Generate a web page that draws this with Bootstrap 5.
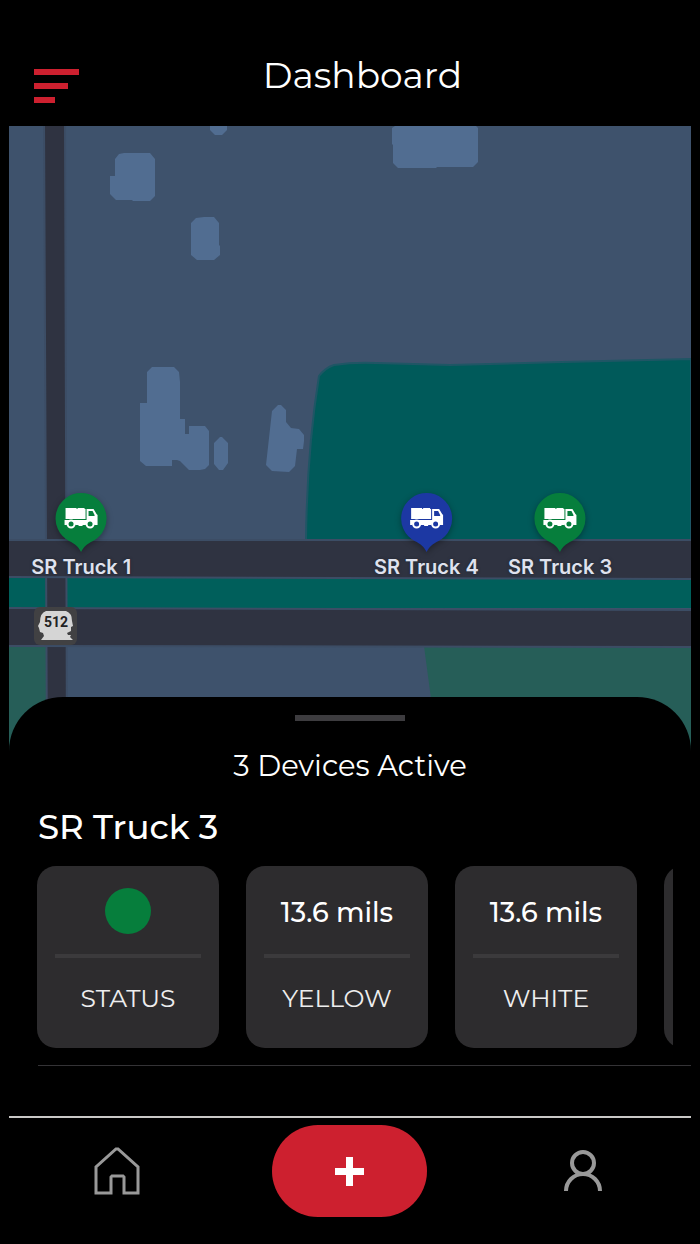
<!DOCTYPE html>
<html lang="en">
<head>
<meta charset="utf-8">
<meta name="viewport" content="width=device-width, initial-scale=1">
<title>Dashboard</title>
<link href="https://cdn.jsdelivr.net/npm/bootstrap@5.3.0/dist/css/bootstrap.min.css" rel="stylesheet">
<style>
  body { background: #000; color: #fff; font-family: Montserrat, Inter, "Liberation Sans", sans-serif; }
  .app-header { padding: 50px 54px 0 34px; height: 126px; }
  .menu-btn { padding: 19px 0 0; }
  .screen-title { font-size: 36px; line-height: 50px; font-weight: 400; }
  .map-area { margin: 0 9px; min-height: 480px; background: #3e526c; }
  .map-pin { transform: translateX(-50%); top: 58%; padding: 0; color: #dfe2ee; font: 600 20px/24px Inter, "Liberation Sans", sans-serif; }
  .map-pin svg { filter: drop-shadow(0 2px 3px #0005); }
  .pin-1 { left: 10.6%; }
  .pin-4 { left: 61.2%; }
  .pin-3 { left: 80.8%; }
  .pin-label { margin-top: -2px; text-shadow: 0 0 3px #20242f; }
  .route-shield { left: 3.6%; top: 77%; }
  .sheet { margin: -54px 9px 0; border-radius: 54px 54px 0 0; background: #000; padding-top: 18px; }
  .grab-bar { width: 110px; height: 6px; background: #3d3c3f; }
  .active-count { font-size: 29px; line-height: 36px; font-weight: 400; margin-top: 27px; }
  .device-name { font-size: 34px; line-height: 44px; font-weight: 500; margin: 21px 0 0 29px; }
  .tile-row { gap: 27px; margin: 17px 18px 0 28px; scrollbar-width: none; }
  .tile-row::-webkit-scrollbar { display: none; }
  .tile { flex: 0 0 182px; height: 182px; border-radius: 19px; background: #2d2c2e; padding: 20px 18px; }
  .tile-value { height: 50px; font-size: 27px; font-weight: 500; }
  .tile-text { padding-top: 4px; }
  .tile-rule { height: 4px; margin-top: 18px; background: #3b3a3c; }
  .tile-label { font-size: 25px; line-height: 32px; font-weight: 400; margin-top: 24px; color: #eee; }
  .status-dot { width: 46px; height: 46px; background: #067e3c; }
  .device-end { height: 51px; margin: 17px 0 0 29px; border-top: 1px solid #343336; }
  .tab-line { height: 2px; margin: 0 9px; background: #c9c8c6; }
  .tab-bar { height: 126px; padding-top: 7px; }
  .tab-link { height: 92px; }
  .add-btn { width: 155px; height: 92px; border-radius: 46px; background: #cd202f; }
  .add-btn:hover { background: #b41b29; }
</style>
</head>
<body>
<svg class="d-none" aria-hidden="true">
  <symbol id="truck" viewBox="0 0 33 21">
    <path fill="#fff" d="M1 0h11v1h1V0h7v1h1v10H1zM22 1h7l3 5 1 1v10h-3a5 5 0 0 0-9 0h-3v1h-4v-1h-3a5 5 0 0 0-9 0H0v-5h22z"/>
    <path fill="currentColor" d="M24 3h4l2 4v1h-6z"/>
    <circle cx="6.500" cy="16" r="3.500" fill="currentColor" stroke="#fff" stroke-width="2"/>
    <circle cx="25.500" cy="16" r="3.500" fill="currentColor" stroke="#fff" stroke-width="2"/>
  </symbol>
  <symbol id="pin" viewBox="0 0 64 68">
    <path fill="currentColor" d="M32 4a25.500 25.500 0 0 1 12 48c-6 3-9 5-12 11-3-6-6-8-12-11A25.500 25.500 0 0 1 32 4z"/>
    <use href="#truck" x="15" y="19" width="34" height="21"/>
  </symbol>
</svg>

<div class="min-vh-100 d-flex flex-column">
  <header class="app-header d-flex align-items-start">
    <button type="button" class="menu-btn btn border-0 rounded-0" aria-label="Menu">
      <svg class="d-block" width="45" height="34" viewBox="0 0 45 34" fill="#cd202f"><path d="M0 0h45v6H0zM0 14h34v6H0zM0 28h21v6H0z"/></svg>
    </button>
    <h1 class="screen-title flex-grow-1 text-center mb-0">Dashboard</h1>
  </header>

  <main class="d-flex flex-column flex-grow-1">
    <section class="map-area position-relative flex-grow-1 overflow-hidden" aria-label="Map">
      <svg class="position-absolute top-0 start-0 w-100 h-100" viewBox="9 126 682 625" preserveAspectRatio="none" aria-hidden="true">
        <path fill="#3e526c" d="M9 126h682v625H9z"/>
        <g fill="#516d91">
          <path d="M210 126h17v4l-5 5h-7l-5-5zM119 154l5-1h26l5 6v37l-5 5h-17l-1-1h-16l-6-6v-18h5v-17zM196 218l8-1h10l5 6v22l1 1v9l-6 5h-17l-6-5v-32zM395 126h81l2 2v34l-5 5h-36l-1 1h-38l-5-5v-18l-1-1v-16z"/>
          <path d="M152 367h22l5 5 1 10v37h5v15h4v-8h16l4 5v34l-4 4-5 1h-11l-9-9-3-1h-5v6h-26l-6-5v-58h7v-31zM220 437h2l6 6v20l-5 7h-4l-5-6v-21zM278 405h3l5 5v12l5 6 8 1 5 6v6l-1 8h-6l-2 17-6 6-17-1-6-6 6-54z"/>
        </g>
        <path fill="#005a5a" stroke="#1f5665" stroke-width="2" d="M306 540q1-90 13-164 6-8 15-11 20-3 42-2l74 2 112-3 129-3v181z"/>
        <path fill="#005f5b" d="M9 578h682v30H9z"/>
        <path fill="#265e58" d="M9 646h37v105H9zM424 646h267v105H438z"/>
        <g fill="#2f3341" stroke="#3c4d65" stroke-width="2">
          <path d="M44 120h21l2 640H47z"/>
          <path d="M0 540h702v39l-702-2zM0 608l702 2v37l-702-1z"/>
        </g>
      </svg>

      <button type="button" class="map-pin pin-1 btn border-0 position-absolute d-flex flex-column align-items-center text-nowrap">
        <svg width="64" height="68" color="#067e3c"><use href="#pin"/></svg>
        <span class="pin-label">SR Truck 1</span>
      </button>
      <button type="button" class="map-pin pin-4 btn border-0 position-absolute d-flex flex-column align-items-center text-nowrap">
        <svg width="64" height="68" color="#1c38a3"><use href="#pin"/></svg>
        <span class="pin-label">SR Truck 4</span>
      </button>
      <button type="button" class="map-pin pin-3 btn border-0 position-absolute d-flex flex-column align-items-center text-nowrap">
        <svg width="64" height="68" color="#067e3c"><use href="#pin"/></svg>
        <span class="pin-label">SR Truck 3</span>
      </button>
      <svg class="route-shield position-absolute" width="43" height="38" viewBox="0 0 43 38">
        <rect width="43" height="38" rx="6" fill="#414143"/>
        <path fill="#d5d5d5" d="M12 4h20q6 2 6 10l1 5-2 1v4l-4 2 1 2h3l-1 2 3 3H7l3-4-1-3-3-1-1-4-1-2 2-4q0-9 6-11z"/>
        <text x="22" y="20" text-anchor="middle" font-family="Roboto, 'Liberation Sans', sans-serif" font-weight="700" font-size="14" fill="#222224">512</text>
      </svg>
    </section>

    <section class="sheet position-relative">
      <div class="grab-bar mx-auto"></div>
      <p class="active-count text-center mb-0">3 Devices Active</p>
      <h2 class="device-name">SR Truck 3</h2>
      <div class="tile-row d-flex overflow-auto">
        <div class="tile text-center">
          <div class="tile-value d-flex align-items-center justify-content-center"><span class="status-dot rounded-circle" role="img" aria-label="Active"></span></div>
          <div class="tile-rule"></div>
          <div class="tile-label">STATUS</div>
        </div>
        <div class="tile text-center">
          <div class="tile-value tile-text d-flex align-items-center justify-content-center">13.6 mils</div>
          <div class="tile-rule"></div>
          <div class="tile-label">YELLOW</div>
        </div>
        <div class="tile text-center">
          <div class="tile-value tile-text d-flex align-items-center justify-content-center">13.6 mils</div>
          <div class="tile-rule"></div>
          <div class="tile-label">WHITE</div>
        </div>
        <div class="tile"></div>
      </div>
      <div class="device-end"></div>
    </section>
  </main>

  <div class="tab-line"></div>
  <nav class="tab-bar row g-0" aria-label="Main">
    <div class="col-4">
      <a href="#" class="tab-link d-flex align-items-center justify-content-center" aria-label="Home">
        <svg width="46" height="48" viewBox="0 0 46 48" fill="none" stroke="#999" stroke-width="3"><path d="M2 46V20L22 2h2l20 18v26H30V30l-1-1H18l-1 1v16z"/></svg>
      </a>
    </div>
    <div class="col-4 d-flex justify-content-center">
      <button type="button" class="add-btn btn p-0 border-0 d-flex align-items-center justify-content-center" aria-label="Add">
        <svg width="29" height="29" viewBox="0 0 29 29" fill="#fff"><path d="M11 0h7v11h11v7H18v11h-7V18H0v-7h11z"/></svg>
      </button>
    </div>
    <div class="col-4">
      <a href="#" class="tab-link d-flex align-items-center justify-content-center" aria-label="Profile">
        <svg width="40" height="42" viewBox="0 0 40 42" fill="none" stroke="#999" stroke-width="4"><circle cx="20" cy="13" r="11"/><path d="M3 41a17 17 0 0 1 34 0"/></svg>
      </a>
    </div>
  </nav>
</div>
<script src="https://cdn.jsdelivr.net/npm/bootstrap@5.3.0/dist/js/bootstrap.bundle.min.js"></script>
</body>
</html>
